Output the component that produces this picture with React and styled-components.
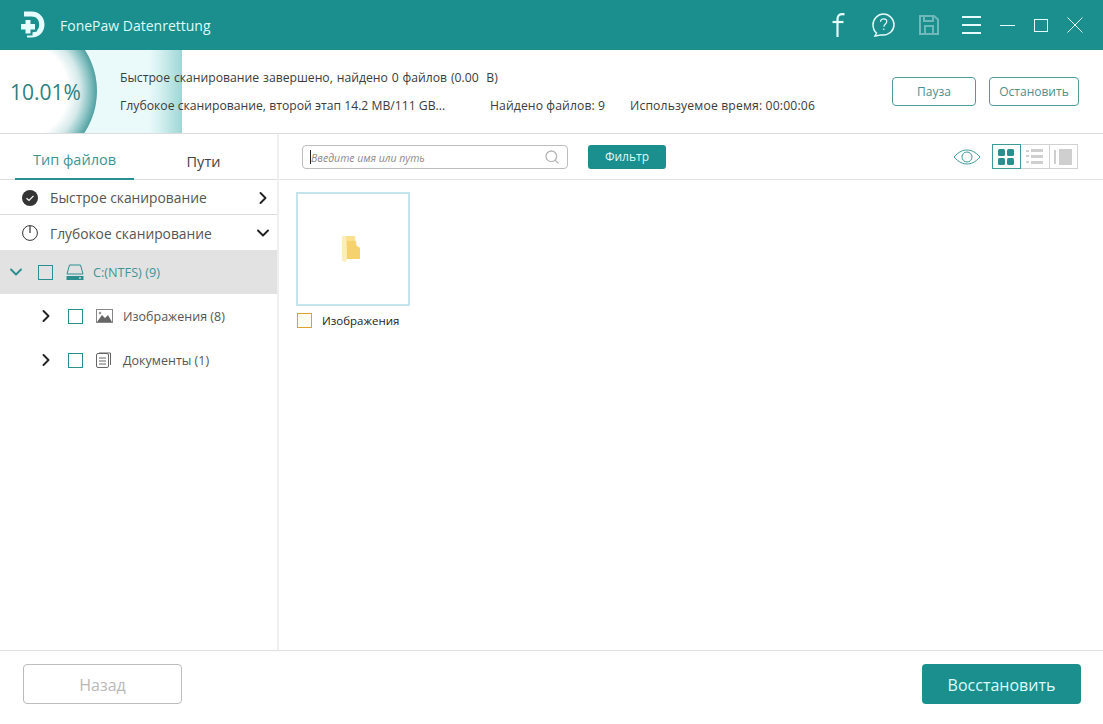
import React from "react";
import styled, { createGlobalStyle } from "styled-components";
import { ChevronRight, ChevronDown, Search } from "lucide-react";

const GlobalStyle = createGlobalStyle`
  html, body { margin: 0; padding: 0; background: #fff; }
  body { font-family: "Open Sans", "Noto Sans", sans-serif; color: #444; }
`;

const Logo = () => (
  <svg width="27" height="28" viewBox="0 0 27 28" fill="none">
    <path d="M6 0.500 H13.500 C21.500 0.500 26.500 6.500 26.500 13.500 C26.500 20.500 21.500 26.500 13.500 26.500 H9 V21.500 H13.500 C18.500 21.500 21.200 18 21.200 13.500 C21.200 9 18.500 5.500 13.500 5.500 H6 Z" fill="#e6fbfb" />
    <path d="M6.500 8 H13.500 V12 H18 V19.500 H13.500 V23.500 H6.500 V19.500 H2 V12 H6.500 Z" fill="#e6fbfb" stroke="#1a8f8e" strokeWidth="2" />
  </svg>
);

const FacebookIcon = () => (
  <svg width="13" height="24" viewBox="0 0 13 24" fill="none" stroke="#e6fbfb" strokeWidth="2.200">
    <path d="M12.500 1.300 C8 0.500 5.500 2 5.500 6 V24" />
    <path d="M0.500 9 H11.500" />
  </svg>
);

const HelpIcon = () => (
  <svg width="23" height="24" viewBox="0 0 23 24" fill="none" stroke="#e6fbfb" strokeWidth="1.500">
    <path d="M4.500 20 C2 18 1 15 1 11.800 C1 6 5.800 1 11.500 1 C17.200 1 22 6 22 11.800 C22 17.600 17.200 22 11.500 22 C9 22 7.500 21.500 6 22.500 L3 23 Z" />
    <path d="M8.500 8.800 C8.500 6.800 10 5.800 11.500 5.800 C13.500 5.800 14.800 7 14.800 8.600 C14.800 10.800 11.800 11.300 11.800 13.800" strokeWidth="1.200" />
    <circle cx="11.700" cy="16.300" r="0.800" fill="#e6fbfb" stroke="none" />
  </svg>
);

const SaveIcon = () => (
  <svg width="20" height="20" viewBox="0 0 20 20" fill="none" stroke="#6fb8b9" strokeWidth="2">
    <path d="M1 1 H15 L19 4.500 V19 H1 Z" />
    <path d="M5 1 V6 H14 V1" />
    <path d="M6 19 V11 H14 V19" />
  </svg>
);

const EyeIcon = () => (
  <svg width="28" height="16" viewBox="0 0 28 16" fill="none" stroke="#3f9a9b" strokeWidth="1">
    <path d="M1 8 C6 2.500 10 1 14 1 C18 1 22 2.500 27 8 C22 13.500 18 15 14 15 C10 15 6 13.500 1 8 Z" />
    <circle cx="14" cy="8" r="5" />
  </svg>
);

const GridIcon = () => (
  <svg width="16" height="16" viewBox="0 0 16 16" fill="#2b8f90">
    <rect x="0" y="0" width="7" height="7" rx="1.500" />
    <rect x="9" y="0" width="7" height="7" rx="1.500" />
    <rect x="0" y="9" width="7" height="7" rx="1.500" />
    <rect x="9" y="9" width="7" height="7" rx="1.500" />
  </svg>
);

const ListIcon = () => (
  <svg width="17" height="15" viewBox="0 0 17 15" fill="#cfcfcf">
    <rect x="0" y="1" width="3" height="2" />
    <rect x="5" y="0" width="12" height="3" />
    <rect x="0" y="6" width="3" height="2" />
    <rect x="5" y="6" width="12" height="3" />
    <rect x="0" y="12" width="3" height="2" />
    <rect x="5" y="12" width="12" height="3" />
  </svg>
);

const PanelIcon = () => (
  <svg width="18" height="16" viewBox="0 0 18 16" fill="#cfcfcf">
    <rect x="0" y="1" width="2" height="14" />
    <rect x="5" y="0" width="13" height="16" />
  </svg>
);

const CheckCircle = () => (
  <svg width="16" height="16" viewBox="0 0 16 16">
    <circle cx="8" cy="8" r="8" fill="#333" />
    <path d="M4.500 8.200 L7 10.500 L11.500 5.800" stroke="#fff" strokeWidth="1.200" fill="none" />
  </svg>
);

const ClockIcon = () => (
  <svg width="16" height="16" viewBox="0 0 16 16" fill="none" stroke="#333" strokeWidth="1">
    <circle cx="8" cy="8" r="7.400" />
    <path d="M8 1 V8" strokeWidth="1.200" />
  </svg>
);

const DriveIcon = () => (
  <svg width="18" height="17" viewBox="0 0 18 17" fill="none">
    <path d="M3.500 1 H14.500 L17 10 H1 Z" stroke="#2b8f90" strokeWidth="1" />
    <rect x="0.500" y="12" width="17" height="4" fill="#2b8f90" />
    <rect x="13" y="13.500" width="2" height="1" fill="#fff" />
  </svg>
);

const ImageIcon = () => (
  <svg width="17" height="14" viewBox="0 0 17 14">
    <rect x="0.500" y="0.500" width="16" height="13" fill="#fff" stroke="#888" />
    <path d="M1 13 L6 6 L9 9 L12 6 L16 13 Z" fill="#666" />
    <circle cx="4" cy="4" r="1.300" fill="#999" />
  </svg>
);

const DocIcon = () => (
  <svg width="15" height="16" viewBox="0 0 15 16" fill="none" stroke="#666" strokeWidth="1">
    <rect x="0.500" y="1.500" width="12" height="14" rx="1.500" />
    <path d="M3 1 H14.500 V13" />
    <path d="M3 6 H10 M3 9 H10 M3 12 H10" />
  </svg>
);

const FolderIcon = () => (
  <svg width="20" height="28" viewBox="0 0 20 28">
    <path d="M1 1 H14 L15 10 L19 13 V24 H6 L4 27 L1 25 Z" fill="#fbe08e" />
    <path d="M1 1 H5 L6 24 L4 27 L1 25 Z" fill="#fdeeb9" />
    <path d="M6 6 H15 L15.500 11 L19 13 V24 H6 Z" fill="#f6d26f" />
  </svg>
);

export default function App() {
  return (
    <Page>
      <GlobalStyle />
      <TitleBar>
        <Brand>
          <Logo />
          <AppName>FonePaw Datenrettung</AppName>
        </Brand>
        <TitleIcons>
          <FacebookIcon />
          <HelpIcon />
          <SaveIcon />
          <MenuLines>
            <span />
            <span />
            <span />
          </MenuLines>
          <MinimizeBtn />
          <MaximizeBtn />
          <svg width="16" height="16" viewBox="0 0 16 16" stroke="#e6fbfb" strokeWidth="1">
            <path d="M0.500 0.500 L15.500 15.500 M15.500 0.500 L0.500 15.500" />
          </svg>
        </TitleIcons>
      </TitleBar>

      <StatusBar>
        <ProgressBand />
        <ProgressDisc />
        <Percent>10.01%</Percent>
        <StatusText>
          <StatusLine $wordGap={0.7}>Быстрое сканирование завершено, найдено 0 файлов (0.00 &nbsp;B)</StatusLine>
          <StatusLine>
            <DeepScan>Глубокое сканирование, второй этап 14.2 MB/111 GB...</DeepScan>
            <FoundFiles>Найдено файлов: 9</FoundFiles>
            <Elapsed>Используемое время: 00:00:06</Elapsed>
          </StatusLine>
        </StatusText>
        <StatusButtons>
          <OutlineButton $width={84}>Пауза</OutlineButton>
          <OutlineButton $width={90}>Остановить</OutlineButton>
        </StatusButtons>
      </StatusBar>

      <Main>
        <Sidebar>
          <Tabs>
            <Tab $active>Тип файлов</Tab>
            <Tab>Пути</Tab>
          </Tabs>
          <ScanRow>
            <CheckCircle />
            <ScanLabel>Быстрое сканирование</ScanLabel>
            <ChevronRight size={20} color="#222" strokeWidth={2.3} />
          </ScanRow>
          <ScanRow>
            <ClockIcon />
            <ScanLabel>Глубокое сканирование</ScanLabel>
            <ChevronDown size={20} color="#222" strokeWidth={2.3} />
          </ScanRow>
          <DriveRow>
            <ChevronDown size={20} color="#2b8f90" strokeWidth={2.3} />
            <CheckBox />
            <DriveIcon />
            <DriveLabel>C:(NTFS) (9)</DriveLabel>
          </DriveRow>
          <TreeRow>
            <ChevronRight size={20} color="#222" strokeWidth={2.3} />
            <CheckBox />
            <TreeIcon><ImageIcon /></TreeIcon>
            <TreeLabel>Изображения (8)</TreeLabel>
          </TreeRow>
          <TreeRow>
            <ChevronRight size={20} color="#222" strokeWidth={2.3} />
            <CheckBox />
            <TreeIcon><DocIcon /></TreeIcon>
            <TreeLabel>Документы (1)</TreeLabel>
          </TreeRow>
        </Sidebar>

        <Content>
          <Toolbar>
            <SearchBox>
              <Caret />
              <SearchHint>Введите имя или путь</SearchHint>
              <Search size={16} color="#b5b5b5" strokeWidth={2} />
            </SearchBox>
            <FilterButton>Фильтр</FilterButton>
            <ViewTools>
              <EyeIcon />
              <ViewSwitch>
                <ViewButton $active><GridIcon /></ViewButton>
                <ViewButton><ListIcon /></ViewButton>
                <ViewButton><PanelIcon /></ViewButton>
              </ViewSwitch>
            </ViewTools>
          </Toolbar>
          <FileGrid>
            <FileCard>
              <Thumb><FolderIcon /></Thumb>
              <FileCaption>
                <FileCheck />
                <FileName>Изображения</FileName>
              </FileCaption>
            </FileCard>
          </FileGrid>
        </Content>
      </Main>

      <Footer>
        <BackButton>Назад</BackButton>
        <RestoreButton>Восстановить</RestoreButton>
      </Footer>
    </Page>
  );
}

const Page = styled.div`
  width: 1103px;
  height: 724px;
  display: flex;
  flex-direction: column;
  overflow: hidden;
  background: #fff;
`;

const TitleBar = styled.div`
  height: 50px;
  flex: none;
  background: #1a8f8e;
  display: flex;
  align-items: center;
  justify-content: space-between;
  padding: 0 20px 0 18px;
`;

const Brand = styled.div`
  display: flex;
  align-items: center;
  gap: 15px;
`;

const AppName = styled.div`
  font-size: 14px;
  color: #dffafa;
`;

const TitleIcons = styled.div`
  display: flex;
  align-items: center;

  & > svg:nth-child(1) {
    margin-right: 27px;
  }

  & > svg:nth-child(2) {
    margin-right: 24px;
  }
`;

const MenuLines = styled.div`
  width: 19px;
  margin: 0 19px 0 23px;
  display: flex;
  flex-direction: column;
  gap: 6px;

  span {
    display: block;
    height: 2px;
    background: #e6fbfb;
  }
`;

const MinimizeBtn = styled.div`
  width: 15px;
  height: 1px;
  background: #e6fbfb;
  margin-right: 19px;
`;

const MaximizeBtn = styled.div`
  width: 12px;
  height: 11px;
  border: 1px solid #e6fbfb;
  margin-right: 19px;
`;

const StatusBar = styled.div`
  height: 84px;
  flex: none;
  box-sizing: border-box;
  position: relative;
  display: flex;
  align-items: center;
  border-bottom: 1px solid #dcdcdc;
  background: #fff;
  overflow: hidden;
`;

const ProgressBand = styled.div`
  position: absolute;
  left: 0;
  top: 0;
  bottom: 0;
  width: 182px;
  background: linear-gradient(90deg, #eaf9fa 0%, #eaf9fa 82%, #d4f0f0 88%, #9fd6d6 100%);
`;

const ProgressDisc = styled.div`
  position: absolute;
  left: -55px;
  top: -35px;
  width: 152px;
  height: 152px;
  border-radius: 50%;
  background: radial-gradient(circle closest-side, #fff 0%, #fff 62%, #d5e9ea 78%, #8cc4c5 90%, #4f9fa0 100%);
`;

const Percent = styled.div`
  position: relative;
  width: 120px;
  padding-left: 10px;
  box-sizing: border-box;
  font-size: 21px;
  color: #2f7f80;
`;

const StatusText = styled.div`
  position: relative;
  display: flex;
  flex-direction: column;
  gap: 11px;
  font-size: 12.200px;
  line-height: 17px;
  color: #3c3c3c;
`;

const StatusLine = styled.div`
  display: flex;
  white-space: pre;
  word-spacing: ${(p) => p.$wordGap || 0}px;
`;

const DeepScan = styled.span`
  width: 370px;
`;

const FoundFiles = styled.span`
  width: 140px;
  letter-spacing: 0.1px;
`;

const Elapsed = styled.span`
  letter-spacing: 0.15px;
`;

const StatusButtons = styled.div`
  position: absolute;
  right: 24px;
  top: 27px;
  display: flex;
  gap: 13px;
`;

const OutlineButton = styled.button`
  width: ${(p) => p.$width}px;
  height: 29px;
  padding: 0;
  background: #fff;
  border: 1px solid #4f9a9b;
  border-radius: 4px;
  font: inherit;
  font-size: 12px;
  color: #4b8f90;
`;

const Main = styled.div`
  flex: 1;
  display: flex;
  min-height: 0;
`;

const Sidebar = styled.div`
  width: 279px;
  flex: none;
  box-sizing: border-box;
  border-right: 2px solid #efefef;
`;

const Tabs = styled.div`
  height: 46px;
  padding-left: 15px;
  display: flex;
  box-sizing: border-box;
  border-bottom: 1px solid #dcdcdc;
`;

const Tab = styled.div`
  width: ${(p) => (p.$active ? "119px" : "139px")};
  display: flex;
  align-items: center;
  justify-content: center;
  font-size: 14.500px;
  color: ${(p) => (p.$active ? "#3d9596" : "#444")};
  border-bottom: ${(p) => (p.$active ? "2px solid #2b8f90" : "none")};
  margin-bottom: -1px;
  padding-top: ${(p) => (p.$active ? "6px" : "8px")};
  box-sizing: border-box;
`;

const ScanRow = styled.div`
  height: 35px;
  box-sizing: border-box;
  padding: 1px 4px 0 22px;
  display: flex;
  align-items: center;
  border-bottom: 1px solid #dcdcdc;

  &:nth-child(3) {
    border-bottom: none;
  }
`;

const ScanLabel = styled.div`
  flex: 1;
  margin-left: 12px;
  font-size: 13.800px;
  color: #555;
`;

const DriveRow = styled.div`
  height: 44px;
  background: #e2e2e2;
  display: flex;
  align-items: center;
  padding-left: 6px;
`;

const TreeRow = styled.div`
  height: 44px;
  display: flex;
  align-items: center;
  padding-left: 36px;
`;

const CheckBox = styled.div`
  width: 13px;
  height: 13px;
  border: 1px solid #2b8f90;
  margin-left: 12px;
  margin-right: 13px;
  flex: none;
`;

const DriveLabel = styled.div`
  margin-left: 9px;
  font-size: 12.700px;
  color: #3d9596;
`;

const TreeIcon = styled.div`
  width: 17px;
  display: flex;
`;

const TreeLabel = styled.div`
  margin-left: 10px;
  padding-top: 1px;
  font-size: 12.500px;
  color: #555;
`;

const Content = styled.div`
  flex: 1;
  min-width: 0;
`;

const Toolbar = styled.div`
  height: 46px;
  box-sizing: border-box;
  padding: 0 25px 0 23px;
  display: flex;
  align-items: center;
  border-bottom: 1px solid #e3e3e3;
`;

const SearchBox = styled.div`
  width: 266px;
  height: 24px;
  box-sizing: border-box;
  border: 1px solid #bdbdbd;
  border-radius: 4px;
  display: flex;
  align-items: center;
  padding: 0 7px;
`;

const Caret = styled.div`
  width: 1px;
  height: 14px;
  background: #222;
`;

const SearchHint = styled.div`
  flex: 1;
  font-size: 10.500px;
  font-style: italic;
  color: #8a8a8a;
  padding-top: 2px;
`;

const FilterButton = styled.button`
  width: 78px;
  height: 24px;
  margin-left: 20px;
  padding: 0;
  background: #1a8f8e;
  border: none;
  border-radius: 3px;
  font: inherit;
  font-size: 12px;
  color: #dffafa;
`;

const ViewTools = styled.div`
  margin-left: auto;
  display: flex;
  align-items: center;
  gap: 12px;
`;

const ViewSwitch = styled.div`
  display: flex;
`;

const ViewButton = styled.div`
  width: 29.500px;
  height: 25px;
  box-sizing: border-box;
  display: flex;
  align-items: center;
  justify-content: center;
  border: 1px solid ${(p) => (p.$active ? "#3f9a9b" : "#d2d2d2")};
  margin-left: -1px;
  position: ${(p) => (p.$active ? "relative" : "static")};
  z-index: ${(p) => (p.$active ? 1 : 0)};
`;

const FileGrid = styled.div`
  padding: 12px 17px;
`;

const FileCard = styled.div`
  width: 114px;
`;

const Thumb = styled.div`
  width: 114px;
  height: 114px;
  box-sizing: border-box;
  border: 2px solid #c5e3ea;
  padding-right: 4px;
  display: flex;
  align-items: center;
  justify-content: center;
`;

const FileCaption = styled.div`
  display: flex;
  align-items: center;
  margin-top: 7px;
  padding-left: 1px;
`;

const FileCheck = styled.div`
  width: 13px;
  height: 13px;
  border: 1px solid #e0a030;
  background: #fffdf6;
  flex: none;
`;

const FileName = styled.div`
  margin-left: 10px;
  font-size: 11.500px;
  color: #222;
  white-space: nowrap;
`;

const Footer = styled.div`
  height: 74px;
  flex: none;
  box-sizing: border-box;
  border-top: 1px solid #e0e0e0;
  padding: 13px 22px 0 23px;
  display: flex;
  justify-content: space-between;
  align-items: flex-start;
`;

const BackButton = styled.button`
  width: 159px;
  height: 40px;
  padding: 1px 0 0;
  background: #fff;
  border: 1px solid #bdbdbd;
  border-radius: 4px;
  font: inherit;
  font-size: 16px;
  color: #b9b9b9;
`;

const RestoreButton = styled.button`
  width: 159px;
  height: 40px;
  padding: 1px 0 0;
  background: #1a8f8e;
  border: none;
  border-radius: 4px;
  font: inherit;
  font-size: 16px;
  color: #dffafa;
`;
